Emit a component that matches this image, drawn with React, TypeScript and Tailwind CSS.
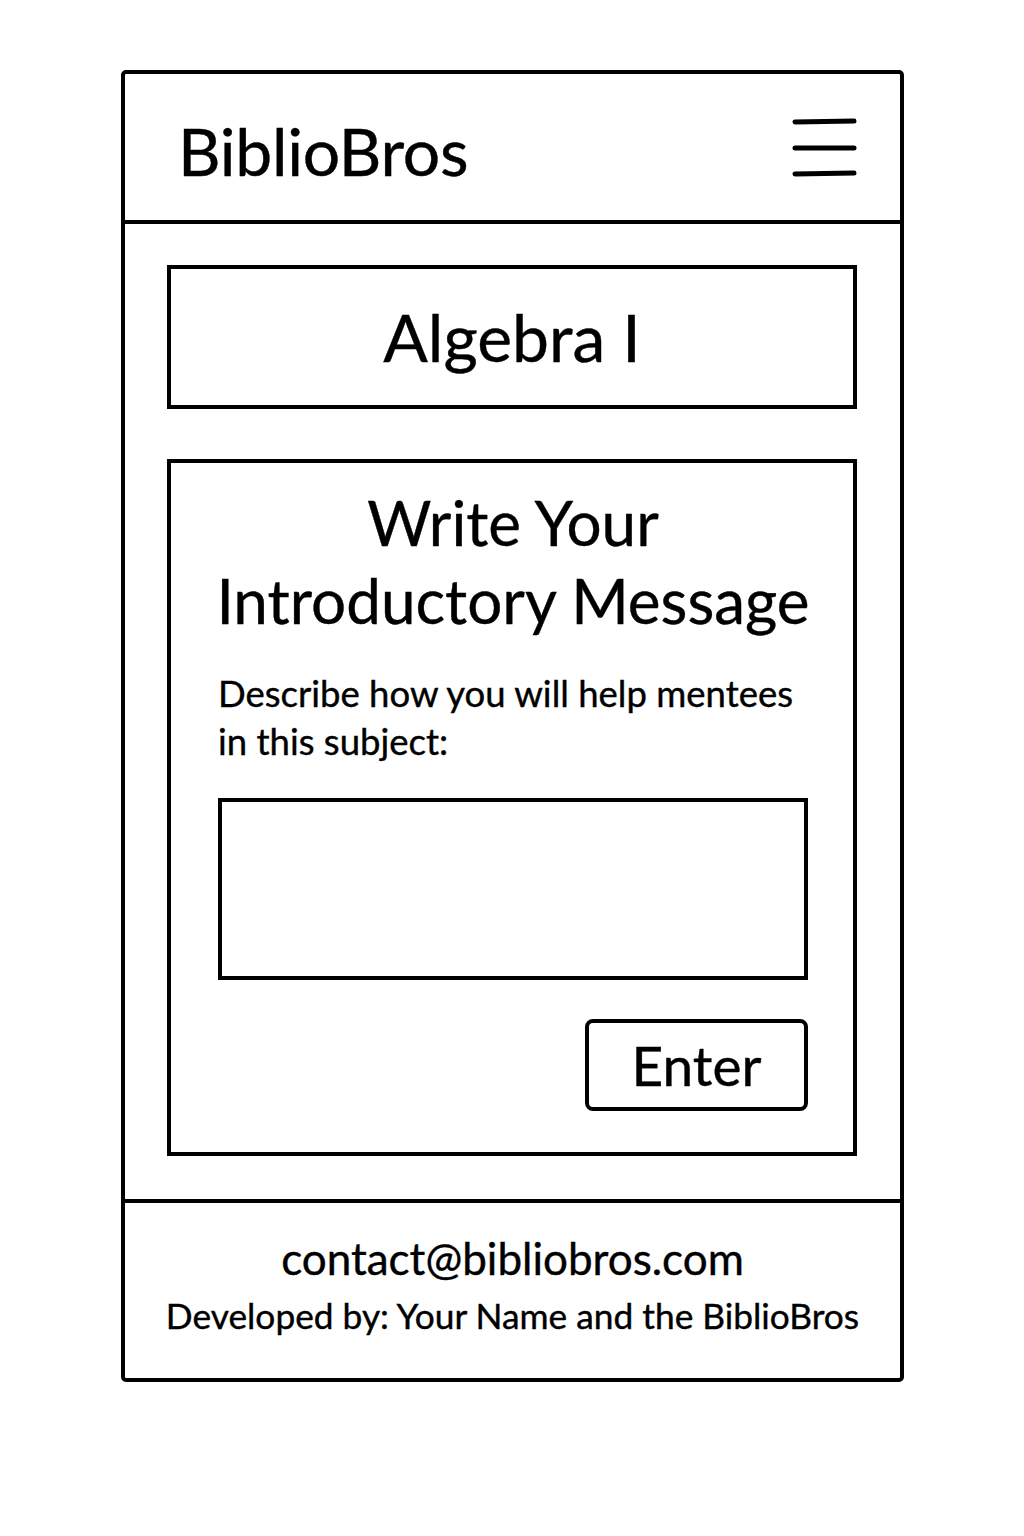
export default function App() {
  return (
    <div className="min-h-[1536px] w-[1024px] bg-white font-['Lato',sans-serif] text-black [-webkit-text-stroke:0.4px_black]">
      <div className="pt-[70px] pl-[121px]">
        <div className="flex w-[783px] flex-col rounded-[5px] border-4 border-black">
          <header className="flex h-[150px] items-center justify-between border-b-4 border-black pl-[53px] pr-[42px]">
            <div className="mt-[7px] text-[66px] leading-none tracking-[-0.3px]">BiblioBros</div>
            <svg width="66" height="62" viewBox="0 0 66 62" fill="none" stroke="black" strokeWidth="5" strokeLinecap="round">
              <line x1="3" y1="6" x2="62" y2="5" />
              <line x1="3" y1="32" x2="62" y2="32" />
              <line x1="3" y1="58" x2="62" y2="57" />
            </svg>
          </header>
          <main className="flex flex-col gap-[50px] pt-[41px] pb-[43px] pl-[42px] pr-[43px]">
            <div className="flex h-[144px] items-center justify-center border-4 border-black">
              <span className="text-[66px] leading-none">Algebra I</span>
            </div>
            <div className="flex h-[697px] flex-col border-4 border-black pt-[20px] pl-[47px] pr-[45px]">
              <h1 className="-mx-[20px] whitespace-nowrap text-center text-[62px] leading-[78px]">
                Write Your
                <br />
                Introductory Message
              </h1>
              <p className="mt-[30px] whitespace-nowrap text-[36.5px] leading-[48px]">
                Describe how you will help mentees
                <br />
                in this subject:
              </p>
              <div className="mt-[33px] h-[182px] shrink-0 border-4 border-black" />
              <div className="mt-[39px] flex shrink-0 justify-end">
                <button className="flex h-[92px] w-[223px] items-center justify-center rounded-[8px] border-4 border-black text-[55px] leading-none">
                  Enter
                </button>
              </div>
            </div>
          </main>
          <footer className="flex h-[179px] flex-col items-center border-t-4 border-black pt-[29px]">
            <div className="text-[44px] leading-[52px]">contact@bibliobros.com</div>
            <div className="mt-[9px] whitespace-nowrap text-[35.3px] leading-[46px]">Developed by: Your Name and the BiblioBros</div>
          </footer>
        </div>
      </div>
    </div>
  );
}
